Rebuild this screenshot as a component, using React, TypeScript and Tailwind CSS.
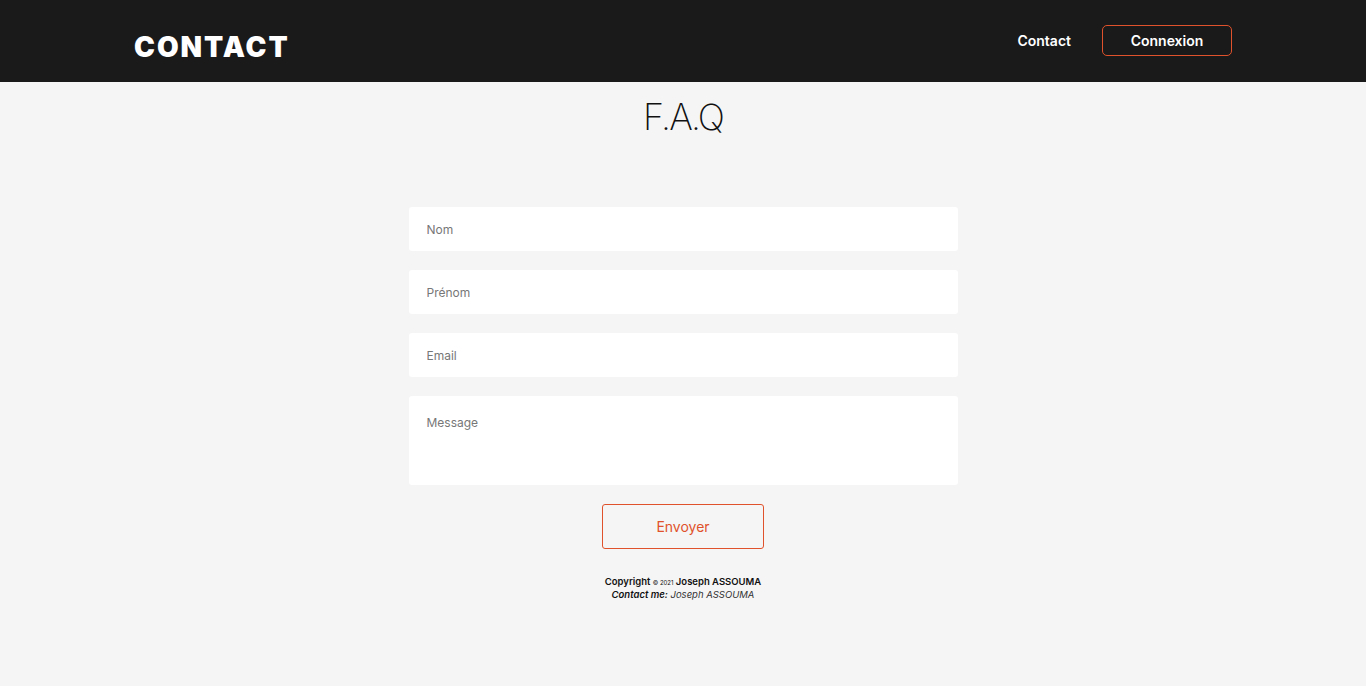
export default function App() {
  return (
    <div className="min-h-[686px] bg-[#f5f5f5] font-['Inter',sans-serif] text-[#111]">
      <header className="bg-[#1a1a1a] h-[82px]">
        <div className="max-w-[1098px] mx-auto h-full flex items-center justify-between">
          <h1 className="text-white text-[28px] font-black tracking-[0.07em] mt-[12px]">CONTACT</h1>
          <nav className="flex items-center gap-[31px] -mt-[2px]">
            <a href="#contact" className="text-white text-[14px] font-semibold">Contact</a>
            <button className="w-[130px] h-[31px] border border-[#e0522b] rounded-[5px] text-white text-[14px] font-semibold">
              Connexion
            </button>
          </nav>
        </div>
      </header>

      <main className="flex flex-col items-center">
        <h2 className="text-[36px] font-extralight leading-none mt-[17px] tracking-[-0.05em]">F.A.Q</h2>

        <form className="w-[549px] mt-[72px] flex flex-col gap-[19px]">
          <input
            placeholder="Nom"
            className="h-[44px] bg-white rounded-[3px] px-[18px] text-[12px] outline-none placeholder:text-[#777]"
          />
          <input
            placeholder="Prénom"
            className="h-[44px] bg-white rounded-[3px] px-[18px] text-[12px] outline-none placeholder:text-[#777]"
          />
          <input
            placeholder="Email"
            className="h-[44px] bg-white rounded-[3px] px-[18px] text-[12px] outline-none placeholder:text-[#777]"
          />
          <textarea
            placeholder="Message"
            className="h-[89px] bg-white rounded-[3px] px-[18px] pt-[18px] text-[12px] outline-none resize-none placeholder:text-[#777]"
          />
          <button
            type="button"
            className="self-center w-[162px] h-[45px] border border-[#e0522b] rounded-[3px] text-[#e0522b] text-[14px]"
          >
            Envoyer
          </button>
        </form>

        <footer className="mt-[27px] text-center text-[9.5px] leading-[12px]">
          <p className="font-semibold">
            Copyright <span className="text-[6px] font-normal">© 2021</span> Joseph ASSOUMA
          </p>
          <p className="italic">
            <span className="font-semibold">Contact me:</span> <span className="text-[#333]">Joseph ASSOUMA</span>
          </p>
        </footer>
      </main>
    </div>
  );
}
